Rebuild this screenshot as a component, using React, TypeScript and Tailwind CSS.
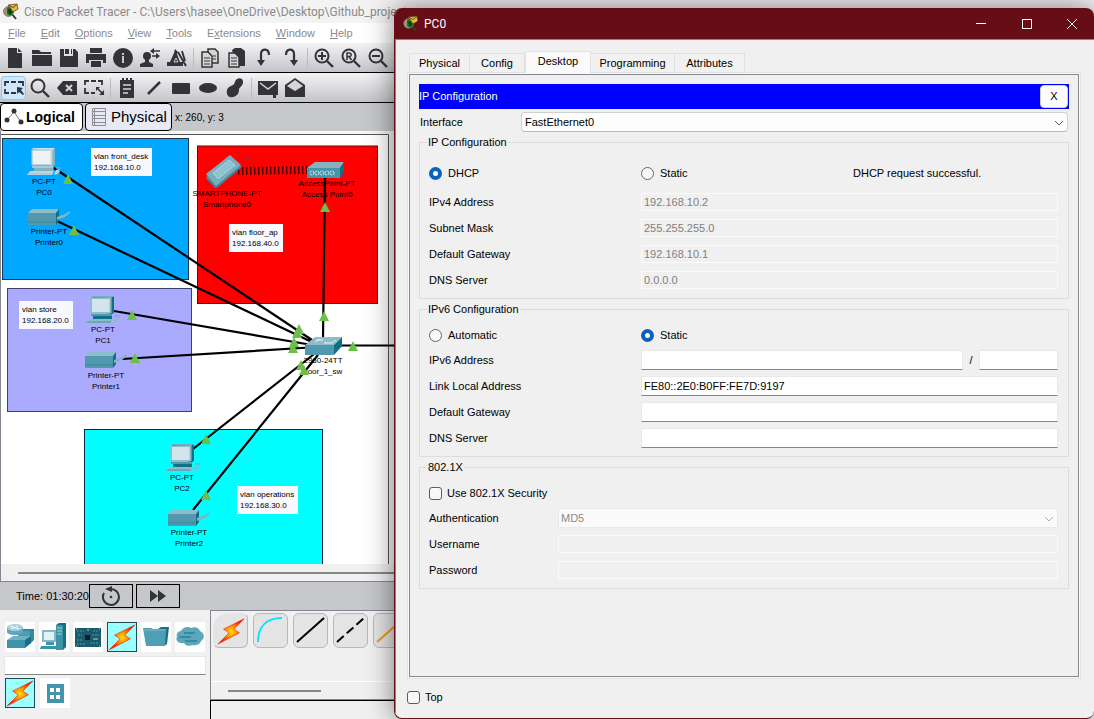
import React from "react";

type Kids = { children?: React.ReactNode };

/* ---------- small drawings ---------- */

function AppLogo() {
  return (
    <svg viewBox="0 0 18 18" className="h-[18px] w-[18px] shrink-0" aria-hidden="true">
      <path d="M10 11l4 5" stroke="#3a3a30" strokeWidth="2" />
      <circle cx="6.500" cy="8.500" r="5" fill="#a98c86" stroke="#5d4d48" strokeWidth="0.6" />
      <path d="M5 5l5-2 2 6-4 4-3-2z" fill="#0b7a12" />
      <path d="M6 7l3-1 1 4-2 2z" fill="#053f08" />
      <path d="M6 2l9-1 1 5-5 3-2-3z" fill="#e5b83a" stroke="#4d3a0c" strokeWidth="0.7" />
      <path d="M7 2.500l4 2 4-3" fill="none" stroke="#5c450e" strokeWidth="0.9" />
    </svg>
  );
}

function Icon({ children }: Kids) {
  return (
    <svg viewBox="0 0 20 20" className="h-5 w-5" fill="#333437" stroke="none" aria-hidden="true">
      {children}
    </svg>
  );
}

const lens = (
  <g fill="none" stroke="#333437">
    <circle cx="8" cy="8" r="6.500" strokeWidth="2" />
    <path d="M13 13l6 6" strokeWidth="2.400" />
  </g>
);

const fileIcons: { name: string; art?: React.ReactNode }[] = [
  { name: "New", art: <path d="M3 0h9v5h5v15H3zM13 0l4 4h-4z" /> },
  { name: "Open", art: <path d="M0 2h7l2 2h10v2H0zM0 7h20v11H0z" /> },
  { name: "Save", art: <path d="M1 1h4v7h9V1h2l3 3v15H1zM6 1h4v5H6zM12 1h1v5h-1z" /> },
  {
    name: "Print",
    art: <path d="M4 0h12v5H4zM0 6h20v9h-3v-3H3v3H0zM5 13h10v6H5z" />,
  },
  {
    name: "Network Info",
    art: (
      <>
        <circle cx="10" cy="10" r="10" />
        <path d="M9 5h2v2H9zM9 8h2v7H9z" fill="#c9c9cb" />
      </>
    ),
  },
  {
    name: "User Profile",
    art: (
      <>
        <circle cx="7" cy="8" r="4" />
        <path d="M5 11h4v3l4 2v3H0v-3l5-2z" />
        <path d="M13 3h7M12 8h6" stroke="#333437" strokeWidth="1.600" />
        <path d="M14 0v6l-4-3zM16 5v6l4-3z" />
      </>
    ),
  },
  {
    name: "Activity Wizard",
    art: (
      <>
        <path d="M8 1l3 3-1 2 3 8h3v4H0v-4h3l4-9z" />
        <path d="M11 4l8 14M15 3l3 10" stroke="#333437" strokeWidth="1.900" />
        <path d="M7 14l2-4 2 4z" fill="none" stroke="#c9c9cb" />
      </>
    ),
  },
  { name: "|" },
  {
    name: "Copy",
    art: (
      <g fill="#d6d6d7" stroke="#333437" strokeWidth="1.500">
        <path d="M8 1h7l3 3v11H8z" />
        <path d="M2 4h6l4 4v11H2z" />
        <path d="M4 10h6M4 13h6M4 16h6M13 8h3M13 11h3" strokeWidth="1.200" />
      </g>
    ),
  },
  {
    name: "Paste",
    art: (
      <>
        <path d="M5 2l3-2h6l4 3v15H9z" />
        <path d="M2 5h6l4 4v10H2z" fill="#d6d6d7" stroke="#333437" strokeWidth="1.500" />
        <path d="M4 10h6M4 13h6M4 16h6" stroke="#333437" strokeWidth="1.200" />
      </>
    ),
  },
  {
    name: "Undo",
    art: (
      <>
        <path d="M15 7C15 0 7 0 7 6v8" fill="none" stroke="#333437" strokeWidth="2.200" />
        <path d="M3 12h8l-4 6z" />
      </>
    ),
  },
  {
    name: "Redo",
    art: (
      <>
        <path d="M5 7c0-7 8-7 8-1v8" fill="none" stroke="#333437" strokeWidth="2.200" />
        <path d="M9 12h8l-4 6z" />
      </>
    ),
  },
  { name: "|" },
  {
    name: "Zoom In",
    art: (
      <>
        {lens}
        <path d="M4 8h8M8 4v8" stroke="#333437" strokeWidth="2" />
      </>
    ),
  },
  {
    name: "Zoom Reset",
    art: (
      <>
        {lens}
        <path d="M6 12V5h2.500a1.500 1.500 0 010 3.500H6M8 8.500L10.500 12" fill="none" stroke="#333437" strokeWidth="1.500" />
      </>
    ),
  },
  {
    name: "Zoom Out",
    art: (
      <>
        {lens}
        <path d="M4 8h8" stroke="#333437" strokeWidth="2" />
      </>
    ),
  },
];

const drawIcons: { name: string; art?: React.ReactNode }[] = [
  {
    name: "Select",
    art: (
      <>
        <path d="M1 8V4h4M7 4h5M14 4h5v4M1 11v4h4M7 15h5" fill="none" stroke="#333437" strokeWidth="1.800" />
        <path d="M13 9l6 1-2 2 3 4-1 1-4-3-2 2z" />
      </>
    ),
  },
  { name: "Inspect", art: lens },
  {
    name: "Delete",
    art: (
      <>
        <path d="M0 10l6-7h14v14H6z" />
        <path d="M9 7l6 6M15 7l-6 6" stroke="#d6d6d7" strokeWidth="2" />
      </>
    ),
  },
  {
    name: "Resize",
    art: (
      <>
        <path d="M1 7V3h4M7 3h5M14 3h4v4M1 10v5h4M7 15h4" fill="none" stroke="#333437" strokeWidth="1.800" />
        <path d="M13 10l5 5" stroke="#333437" strokeWidth="1.600" />
        <path d="M12 9h4l-4 4zM20 17h-5l5-5z" />
      </>
    ),
  },
  { name: "|" },
  {
    name: "Place Note",
    art: (
      <>
        <path d="M3 2h14v18H3z" />
        <path d="M5 0h2v3H5zM9 0h2v3H9zM13 0h2v3h-2z" />
        <path d="M6 7h8M6 11h8M6 15h5" stroke="#d6d6d7" strokeWidth="1.300" />
      </>
    ),
  },
  { name: "Draw Line", art: <path d="M4 16L16 4" stroke="#333437" strokeWidth="2.500" /> },
  { name: "Draw Rectangle", art: <rect x="1" y="5" width="18" height="11" rx="1" /> },
  { name: "Draw Ellipse", art: <ellipse cx="10" cy="10" rx="9" ry="5" /> },
  {
    name: "Draw Freeform",
    art: <path d="M10 4c1-5 9-5 8 1-1 4-4 4-4 7 0 5-5 8-9 7S0 10 6 8c3-1 3-2 4-4z" />,
  },
  { name: "|" },
  {
    name: "Add Simple PDU",
    art: (
      <>
        <path d="M0 3h20v14h-2v3h-3v-3H0z" />
        <path d="M2 5l8 6 8-6" fill="none" stroke="#d6d6d7" strokeWidth="1.500" />
      </>
    ),
  },
  {
    name: "Add Complex PDU",
    art: (
      <>
        <path d="M0 7l10-7 10 7v12H0z" />
        <path d="M2 8l8-6 8 6-8 5z" fill="#d6d6d7" />
      </>
    ),
  },
];

function ToolRow({ items, selected }: { items: typeof fileIcons; selected?: string }) {
  return (
    <div className="flex h-[30px] items-center overflow-hidden border-b border-black bg-gradient-to-b from-[#f4f4f4] to-[#c3c4c8] pl-px">
      {items.map((item, i) =>
        item.name === "|" ? (
          <span key={i} className="flex w-1.5 shrink-0 justify-center">
            <span className="h-5 w-px bg-[#bcbcbf]" />
          </span>
        ) : (
          <button
            key={item.name}
            type="button"
            aria-label={item.name}
            className={
              item.name === selected
                ? "flex h-6 w-[25px] shrink-0 items-center justify-center rounded-sm border border-[#8fc7f3] bg-[#cce8ff]"
                : "flex h-6 w-[27px] shrink-0 items-center justify-center"
            }
          >
            <Icon>{item.art}</Icon>
          </button>
        ),
      )}
    </div>
  );
}

/* ---------- topology ---------- */

function Pc({ x, y, pale }: { x: number; y: number; pale?: boolean }) {
  const side = pale ? "#86b2c0" : "#0d7085";
  const body = pale ? "#b9d5df" : "#8fbccb";
  const base = pale ? "#a5c9d5" : "#5199ae";
  return (
    <g transform={`translate(${x} ${y})`}>
      <path d="M5 1h21l1-1v17l-4 2z" fill={side} />
      <path d="M3 1l3-1h21l-3 2z" fill={pale ? "#cfe3ea" : "#79adbd"} />
      <rect x="3.500" y="1.500" width="21" height="16" rx="1" fill={body} />
      <rect x="5" y="3" width="17.500" height="13" fill={pale ? "#eef2f4" : "#d3e4ea"} />
      <path d="M4 18h21v2H4z" fill={base} />
      <path d="M6 20h19v3H6z" fill={side} />
      <path d="M2 23h24l-2 4H-1z" fill={body} />
      <path d="M1 25h23l-1 2H-1z" fill={base} opacity="0.6" />
      <path d="M28 22l3-1 1 3-4 3-2-1z" fill={body} />
      <path d="M28 20h5" stroke={base} strokeWidth="0.8" strokeDasharray="2 1" />
    </g>
  );
}

function Printer({ x, y }: { x: number; y: number }) {
  return (
    <g transform={`translate(${x} ${y})`}>
      <path d="M0 4l4-4h27l-3 4z" fill="#8fbccb" />
      <path d="M28 4l3-4v12l-3 4z" fill="#0d7085" />
      <path d="M0 4h28v12H0z" fill="#5199ae" />
      <path d="M0 13h28" stroke="#3d8298" strokeWidth="0.8" />
      <path d="M29 8l8-3 5-3v2l-5 4-8 3z" fill="#86b2c0" />
    </g>
  );
}

const lights: [number, number][] = [
  [68, 179], [74, 230], [132, 315], [135, 358], [206, 439], [206, 495], [325, 207],
  [324, 316], [353, 346], [299, 329], [297, 333], [294, 342], [293, 348], [301, 365], [304, 370],
];

const nodeLabels: { at: string; lines: [string, string] }[] = [
  { at: "left-[43px] top-[45px]", lines: ["PC-PT", "PC0"] },
  { at: "left-[48px] top-[95px]", lines: ["Printer-PT", "Printer0"] },
  { at: "left-[226px] top-[57px]", lines: ["SMARTPHONE-PT", "Smartphone0"] },
  { at: "left-[326px] top-[47px]", lines: ["AccessPoint-PT", "Access Point0"] },
  { at: "left-[102px] top-[193px]", lines: ["PC-PT", "PC1"] },
  { at: "left-[105px] top-[239px]", lines: ["Printer-PT", "Printer1"] },
  { at: "left-[181px] top-[341px]", lines: ["PC-PT", "PC2"] },
  { at: "left-[188px] top-[396px]", lines: ["Printer-PT", "Printer2"] },
  { at: "left-[322px] top-[224px]", lines: ["2960-24TT", "floor_1_sw"] },
];

const notes: { at: string; lines: [string, string] }[] = [
  { at: "left-[90px] top-[17px]", lines: ["vlan front_desk", "192.168.10.0"] },
  { at: "left-[228px] top-[93px]", lines: ["vlan floor_ap", "192.168.40.0"] },
  { at: "left-[18px] top-[170px]", lines: ["vlan store", "192.168.20.0"] },
  { at: "left-[236px] top-[355px]", lines: ["vlan operations", "192.168.30.0"] },
];

function Lights() {
  return (
    <>
      {lights.map(([x, y], i) => (
        <path key={i} d={`M${x} ${y - 5}l5 10h-10z`} fill="#6cc04a" />
      ))}
    </>
  );
}

function Topology() {
  return (
    <main className="relative min-h-[433px] flex-1 overflow-hidden border-l border-[#828790] bg-[#f7f7f7]">
      <svg viewBox="1 131 400 433" className="absolute left-0 top-0 h-[433px] w-[400px]" aria-hidden="true">
        <path d="M0 134.500h388.500V566H0z" fill="#fff" stroke="#555" />
        <g stroke="#1c3550">
          <rect x="2.500" y="138.500" width="186" height="141" fill="#00a8ff" />
          <rect x="197.500" y="146" width="180" height="157.500" fill="#f00" stroke="#700" />
          <rect x="7.500" y="288.500" width="184" height="123" fill="#aaaaff" stroke="#404070" />
          <rect x="84.500" y="429.500" width="238" height="150" fill="#0ff" stroke="#125" />
        </g>
        <g stroke="#000" strokeWidth="2.200">
          <path d="M54 168L318 344M57 221L316 344M114 311L318 346M122 359L318 347M193 449L318 351M193 510L318 355M325 176L323 340" />
          <path d="M338 345.500H401" strokeWidth="1.800" />
        </g>
        <path d="M238 171l70-1" stroke="#4a0000" strokeWidth="8" strokeDasharray="1.400 2.600" />
        <Pc x={28} y={148} pale />
        <Pc x={87} y={296} />
        <Pc x={167} y={444} />
        <Printer x={28} y={209} />
        <Printer x={85} y={352} />
        <Printer x={168} y={510} />
        {/* smartphone */}
        <path d="M239 167l7-7" stroke="#1f5c6b" />
        <circle cx="247" cy="159" r="1.200" fill="#1f5c6b" />
        <path d="M207 176l24-19 11 10-24 20-3 1-9-10z" fill="#3f889d" />
        <path d="M206 174l24-19 11 10-25 21z" fill="#79adbd" />
        <path d="M213 173l16-13 6 5-17 14z" fill="#8fc3d2" stroke="#d3ecf3" strokeDasharray="1 1" />
        {/* access point */}
        <path d="M307 168l8-6h29l-4 6z" fill="#86b2c0" />
        <path d="M340 168l4-6v10l-4 6z" fill="#0d7085" />
        <path d="M307 168h33v10h-33z" fill="#4795aa" />
        <g fill="none" stroke="#e3f5fa" strokeDasharray="2 1">
          <circle cx="312" cy="173" r="2" />
          <circle cx="317" cy="173" r="2" />
          <circle cx="322" cy="173" r="2" />
          <circle cx="327" cy="173" r="2" />
          <circle cx="332" cy="173" r="2" />
        </g>
        {/* switch */}
        <path d="M305 345l10-8h27l-8 8z" fill="#8fbccb" />
        <path d="M334 345l8-8v9l-8 9z" fill="#0d7085" />
        <path d="M305 345h29v10h-29z" fill="#5199ae" />
        <path d="M315 342l5-3M316 340h7M324 343h8l4-3" fill="none" stroke="#e3f5fa" />
      </svg>
      {nodeLabels.map((n) => (
        <p
          key={n.lines.join()}
          className={"absolute -translate-x-1/2 whitespace-nowrap text-center text-[8px] leading-[11px] text-black " + n.at}
        >
          {n.lines[0]}
          <br />
          {n.lines[1]}
        </p>
      ))}
      {notes.map((n) => (
        <p
          key={n.lines.join()}
          className={"absolute whitespace-nowrap bg-[#f8f8ff] py-[3px] pl-[3px] pr-1 text-[8px] leading-[11px] text-black " + n.at}
        >
          {n.lines[0]}
          <br />
          {n.lines[1]}
        </p>
      ))}
      <svg viewBox="1 131 400 433" className="absolute left-0 top-0 h-[433px] w-[400px]" aria-hidden="true">
        <Lights />
      </svg>
    </main>
  );
}

/* ---------- device palette ---------- */

function Bolt() {
  return (
    <svg viewBox="0 0 30 30" className="h-7 w-7 shrink-0" aria-hidden="true">
      <defs>
        <radialGradient id="bolt">
          <stop offset="0" stopColor="#ffe600" />
          <stop offset="0.450" stopColor="#ff8a00" />
          <stop offset="1" stopColor="#ff1500" />
        </radialGradient>
      </defs>
      <path d="M29 2L7 13l6 4L1 29l23-12-6-4z" fill="url(#bolt)" stroke="#f01808" strokeWidth="0.600" />
    </svg>
  );
}

function PaletteArt({ children }: Kids) {
  return (
    <svg viewBox="0 0 30 30" className="h-[30px] w-[30px]" aria-hidden="true">
      {children}
    </svg>
  );
}

const palette: { name: string; art: React.ReactNode }[] = [
  {
    name: "Network Devices",
    art: (
      <PaletteArt>
        <path d="M13 9l4-2h12v11l-4 4H13z" fill="#2f8ca3" />
        <path d="M13 9h12v12H13z" fill="#4c9db2" />
        <path d="M2 5v5c0 4 16 4 16 0V5z" fill="#5ba8bc" />
        <ellipse cx="10" cy="5.500" rx="8" ry="3.500" fill="#a7cfda" />
        <path d="M5 4l9 3M13 4L6 7" stroke="#fff" />
        <path d="M2 18l6-4h18l-5 5H2z" fill="#6fb0c2" />
        <path d="M2 18h18v8H2z" fill="#3c93aa" />
        <path d="M20 18l6-4v7l-6 5z" fill="#176f86" />
      </PaletteArt>
    ),
  },
  {
    name: "End Devices",
    art: (
      <PaletteArt>
        <path d="M17 3l3-2h7v24l-3 3h-7z" fill="#176f86" />
        <path d="M17 3h7v25h-7z" fill="#3c93aa" />
        <path d="M18 6h5M18 9h5M18 12h5" stroke="#a7cfda" />
        <path d="M3 8h14v12H3z" fill="#86b9c8" />
        <path d="M5 10h10v8H5z" fill="#e4f1f5" />
        <path d="M7 20h8v3H7zM2 24h15v3H1z" fill="#3c93aa" />
      </PaletteArt>
    ),
  },
  {
    name: "Components",
    art: (
      <PaletteArt>
        <path d="M2 6h26v19H2z" fill="#1b5a6c" />
        <path d="M4 9h7M5 13h4M20 9h6M19 13h7M4 18h6M4 22h8M17 21h9" stroke="#4a9cb1" strokeDasharray="2 1" />
        <path d="M12 13h5v5h-5z" fill="#0a222b" />
        <path d="M3 7h1M26 7h1M3 24h1M26 24h1M14 8h2M20 17h5" stroke="#d8c9a0" />
      </PaletteArt>
    ),
  },
  { name: "Connections", art: <Bolt /> },
  {
    name: "Miscellaneous",
    art: (
      <PaletteArt>
        <path d="M17 7l3-2h8l-2 17-3 2z" fill="#176f86" />
        <path d="M2 6h8l2 1h13l-1 17H5z" fill="#4f9fb4" />
        <path d="M2 8h23" stroke="#86b9c8" />
      </PaletteArt>
    ),
  },
  {
    name: "Multiuser",
    art: (
      <PaletteArt>
        <path d="M6 9c2-4 7-5 10-3 4-2 8 0 9 3 5 2 5 8 1 10-1 4-6 5-9 4-4 2-7 0-8-2-6 1-9-3-7-6-1-3 1-6 4-6z" fill="#5ba8bc" />
        <path d="M9 11h11M4 15h12M10 19h12" stroke="#2c7f97" strokeWidth="1.300" />
      </PaletteArt>
    ),
  },
];

function PaletteButton({ name, active, children }: Kids & { name: string; active?: boolean }) {
  return (
    <button
      type="button"
      aria-label={name}
      className={
        active
          ? "flex h-[30px] w-[30px] items-center justify-center border border-[#1b4a55] bg-[#99ffff]"
          : "flex h-[30px] w-[30px] items-center justify-center bg-white"
      }
    >
      {children}
    </button>
  );
}

const cables: { name: string; art: React.ReactNode }[] = [
  { name: "Automatic", art: <Bolt /> },
  {
    name: "Console",
    art: <path d="M5 29C5 14 13 5 29 5" fill="none" stroke="#00e5ff" strokeWidth="2" />,
  },
  { name: "Copper Straight-Through", art: <path d="M4 29L31 5" stroke="#000" strokeWidth="2" /> },
  {
    name: "Copper Cross-Over",
    art: <path d="M4 29L31 5" stroke="#000" strokeWidth="2" strokeDasharray="9 4" />,
  },
  { name: "Fiber", art: <path d="M4 29L31 5" stroke="#f09a10" strokeWidth="2" /> },
];

function Bottom() {
  return (
    <footer className="flex h-[109px] shrink-0 bg-[#f0f0f0]">
      <section className="w-[210px] shrink-0 px-1 pt-3">
        <div className="flex gap-1 pl-px">
          {palette.map((p) => (
            <PaletteButton key={p.name} name={p.name} active={p.name === "Connections"}>
              {p.art}
            </PaletteButton>
          ))}
        </div>
        <input
          aria-label="Search devices"
          className="mt-1 block h-[19px] w-full border border-b-[#868686] border-l-[#e6e6e6] border-r-[#e6e6e6] border-t-[#e6e6e6] bg-white px-1 text-[11px] outline-none"
        />
        <div className="mt-[3px] flex gap-[5px] pl-px">
          <PaletteButton name="Connections" active>
            <Bolt />
          </PaletteButton>
          <PaletteButton name="Structured Cabling">
            <PaletteArt>
              <path d="M7 6h17v19H7z" fill="#4495ab" />
              <path d="M10 10h4v4h-4zM16 10h4v4h-4zM10 17h4v4h-4zM16 17h4v4h-4z" fill="#fff" />
            </PaletteArt>
          </PaletteButton>
        </div>
      </section>
      <section className="flex min-w-0 flex-1 flex-col">
        <div className="flex h-[90px] flex-col border border-[#828790]">
          <div className="flex h-[71px] gap-[5px] border-b border-white pl-0.5 pt-0.5">
            {cables.map((c, i) => (
              <button
                key={c.name}
                type="button"
                aria-label={c.name}
                className={
                  "flex h-[35px] w-[35px] shrink-0 items-center justify-center border border-[#b8b8b8] bg-[#e4e4e4] " +
                  (i === 0 ? "rounded-md rounded-tl-2xl border-l-transparent border-t-transparent" : "rounded-md")
                }
              >
                {i === 0 ? (
                  c.art
                ) : (
                  <svg viewBox="0 0 35 35" className="h-[35px] w-[35px] shrink-0" aria-hidden="true">
                    {c.art}
                  </svg>
                )}
              </button>
            ))}
          </div>
          <div className="ml-[17px] mt-2 h-0.5 w-[93px] bg-[#868686]" />
        </div>
        <div className="flex-1 border-l border-t border-black" />
      </section>
    </footer>
  );
}

/* ---------- main window ---------- */

const menus = ["File", "Edit", "Options", "View", "Tools", "Extensions", "Window", "Help"];
const menuKeys = [0, 0, 0, 0, 0, 1, 0, 0];

function MainWindow() {
  return (
    <div className="flex min-h-screen w-full flex-col">
      <header className="flex h-[23px] shrink-0 items-center gap-1 overflow-hidden bg-[#f3f3f3] pl-0.5">
        <AppLogo />
        <h1 className="whitespace-nowrap font-['Roboto','Open_Sans',sans-serif] text-[12px] leading-4 text-[#8a8a8a]">
          Cisco Packet Tracer - C:\Users\hasee\OneDrive\Desktop\Github_project
        </h1>
      </header>
      <nav className="flex h-5 shrink-0 items-center gap-[15px] bg-white pl-2 text-[11px] text-[#8a8a8a]">
        {menus.map((m, i) => (
          <button key={m} type="button">
            {m.slice(0, menuKeys[i])}
            <u>{m.charAt(menuKeys[i])}</u>
            {m.slice(menuKeys[i] + 1)}
          </button>
        ))}
      </nav>
      <ToolRow items={fileIcons} />
      <ToolRow items={drawIcons} selected="Select" />
      <div className="flex h-7 shrink-0 items-center gap-0.5 bg-[#c6c7cb]">
        <button type="button" className="flex h-7 w-[83px] items-center gap-0.5 rounded-sm border border-black bg-white pl-[3px] text-[14px] font-bold">
          <svg viewBox="0 0 20 20" className="h-5 w-5" fill="#333437" aria-hidden="true">
            <path d="M3 13l7-8 7 10" fill="none" stroke="#777" />
            <circle cx="3" cy="13" r="2.500" />
            <circle cx="10" cy="4" r="2.500" />
            <circle cx="17" cy="15" r="2.500" />
          </svg>
          Logical
        </button>
        <button type="button" className="flex h-7 w-[87px] items-center gap-1 rounded-sm border border-black bg-[#e8e9f3] pl-[5px] text-[15px]">
          <svg viewBox="0 0 16 20" className="h-5 w-4" fill="none" stroke="#8c8d92" aria-hidden="true">
            <path d="M1.500 1.500h13v17h-13zM1.500 4.500h13M1.500 8.500h13M1.500 11.500h13M1.500 15.500h13M3.500 1.500v17" />
          </svg>
          Physical
        </button>
        <span className="pl-px text-[10px]">x: 260, y: 3</span>
      </div>
      <Topology />
      <div className="h-[18px] shrink-0 border-b border-l border-[#828790] bg-[#f0f0f0] pl-[17px] pt-2">
        <div className="h-0.5 bg-[#868686]" />
      </div>
      <div className="flex h-7 shrink-0 items-center gap-[3px] bg-[#c6c7cb] pl-4 text-[11px]">
        <span className="w-[70px] whitespace-nowrap">Time: 01:30:20</span>
        <button type="button" aria-label="Power cycle devices" className="flex h-6 w-11 items-center justify-center border border-black">
          <svg viewBox="0 0 20 20" className="h-5 w-5" aria-hidden="true">
            <path d="M9 3a8 8 0 11-6 4" fill="none" stroke="#333437" strokeWidth="2" />
            <path d="M4 3l7-3v6z" fill="#333437" />
            <circle cx="10" cy="11" r="1.300" fill="#333437" />
          </svg>
        </button>
        <button type="button" aria-label="Fast forward time" className="flex h-6 w-11 items-center justify-center border border-black">
          <svg viewBox="0 0 18 14" className="h-3.5 w-[18px]" fill="#333437" aria-hidden="true">
            <path d="M1 1l8 6-8 6zM9 1l8 6-8 6z" />
          </svg>
        </button>
      </div>
      <Bottom />
    </div>
  );
}

/* ---------- PC0 window ---------- */

const disabledBox =
  "h-[18px] min-w-0 flex-1 border border-[#fbfbfb] bg-[#f0f0f0] px-0.5 text-[11px] leading-4 text-[#808080] outline-none";
const editBox =
  "h-5 min-w-0 border border-b-[#868686] border-l-[#e8e8e8] border-r-[#e8e8e8] border-t-[#e8e8e8] bg-white px-0.5 text-[11px] leading-4 text-black outline-none";
const radioBox =
  "m-0 h-[13px] w-[13px] shrink-0 appearance-none rounded-full border border-[#666] bg-[#f8f8f8] checked:border-4 checked:border-[#0a63b8] checked:bg-white";
const tickBox =
  "m-0 h-[13px] w-[13px] shrink-0 appearance-none rounded-[3px] border border-[#5c5c5c] bg-[#f8f8f8] checked:bg-[#0a63b8]";

function Group({ title, children }: Kids & { title: string }) {
  return (
    <fieldset className="mt-[3px] min-w-0 border border-[#dcdcdc] pb-[5px] pl-[9px] pr-2.5">
      <legend className="-ml-0.5 h-3.5 px-px leading-[14px]">{title}</legend>
      {children}
    </fieldset>
  );
}

function Row({ id, label, wide, children }: Kids & { id: string; label: string; wide?: boolean }) {
  return (
    <div className="flex h-[26px] items-center">
      <label htmlFor={id} className={wide ? "w-[129px] shrink-0" : "w-[212px] shrink-0"}>
        {label}
      </label>
      {children}
    </div>
  );
}

function Choice({ name, label, on }: { name: string; label: string; on?: boolean }) {
  return (
    <label className="flex w-[212px] shrink-0 items-center gap-1.5">
      <input type="radio" name={name} defaultChecked={on} className={radioBox} />
      {label}
    </label>
  );
}

function Chevron({ faded }: { faded?: boolean }) {
  return (
    <svg
      viewBox="0 0 10 6"
      className="pointer-events-none absolute right-1 top-2 h-1.5 w-2.5"
      fill="none"
      stroke={faded ? "#b0b0b0" : "#606060"}
      aria-hidden="true"
    >
      <path d="M1 1l4 4 4-4" />
    </svg>
  );
}

function PcWindow() {
  return (
    <div
      role="dialog"
      aria-label="PC0"
      className="absolute bottom-0 left-[394px] right-0 top-2 flex flex-col overflow-hidden rounded-lg border-b border-l border-[#670d16] bg-[#f0f0f0] text-[11px] text-black shadow-[0_0_28px_rgba(0,0,0,0.5)]"
    >
      <header className="flex h-8 shrink-0 items-center border-b border-[#828790] bg-[#670d16] pl-[7px] text-white">
        <AppLogo />
        <h2 className="ml-1 flex-1 font-['Roboto','Open_Sans',sans-serif] text-[12px]">PC0</h2>
        <button type="button" aria-label="Minimize" className="flex h-full w-[46px] items-center justify-center">
          <span className="h-px w-2.5 bg-white" />
        </button>
        <button type="button" aria-label="Maximize" className="flex h-full w-[45px] items-center justify-center">
          <span className="h-2.5 w-2.5 border border-white" />
        </button>
        <button type="button" aria-label="Close" className="flex h-full w-[45px] items-center justify-center">
          <svg viewBox="0 0 10 10" className="h-2.5 w-2.5" stroke="#fff" aria-hidden="true">
            <path d="M0 0l10 10M10 0L0 10" />
          </svg>
        </button>
      </header>

      <div className="flex flex-1 flex-col border-l border-[#828790] pb-3.5 pl-[11px] pr-[13px] pt-[11px]">
        <div role="tablist" className="z-10 -mb-px flex items-end pl-0.5">
          {[
            ["Physical", "w-[61px]"],
            ["Config", "w-[55px]"],
            ["Desktop", "w-[66px]"],
            ["Programming", "w-[84px]"],
            ["Attributes", "w-[70px]"],
          ].map(([name, width]) => (
            <button
              key={name}
              type="button"
              role="tab"
              aria-selected={name === "Desktop"}
              className={
                (name === "Desktop"
                  ? "h-[22px] border border-b-0 border-[#e2e2e2] bg-[#fafafa] pb-0.5 "
                  : "h-5 border border-l-0 border-[#e0e0e0] bg-[#f1f1f1] first:border-l ") + width
              }
            >
              {name}
            </button>
          ))}
        </div>

        <div className="flex-1 border border-[#e2e2e2] bg-[#fafafa] p-px">
          <div className="h-full border border-[#828790] bg-[#f0f0f0] px-[9px] pt-[9px]">
            <div className="flex h-[25px] items-center justify-between bg-[#0000ff] pr-px text-white">
              <h3>IP Configuration</h3>
              <button type="button" className="h-[23px] w-7 rounded border border-[#d0d0d0] bg-[#fdfdfd] text-black">
                X
              </button>
            </div>
            <div className="mt-[3px] flex h-5 items-center pl-px pr-px">
              <label htmlFor="interface" className="w-[101px] shrink-0">
                Interface
              </label>
              <div className="relative flex-1">
                <select
                  id="interface"
                  className="block h-5 w-full appearance-none rounded-sm border border-[#d0d0d0] border-b-[#b8b8b8] bg-[#fdfdfd] pl-[3px] text-[11px] leading-4 outline-none"
                >
                  <option>FastEthernet0</option>
                </select>
                <Chevron />
              </div>
            </div>

            <Group title="IP Configuration">
              <div className="mb-1 mt-3 flex h-6 items-center">
                <Choice name="v4" label="DHCP" on />
                <Choice name="v4" label="Static" />
                <output>DHCP request successful.</output>
              </div>
              <Row id="ip4" label="IPv4 Address">
                <input id="ip4" disabled defaultValue="192.168.10.2" className={disabledBox} />
              </Row>
              <Row id="mask" label="Subnet Mask">
                <input id="mask" disabled defaultValue="255.255.255.0" className={disabledBox} />
              </Row>
              <Row id="gw4" label="Default Gateway">
                <input id="gw4" disabled defaultValue="192.168.10.1" className={disabledBox} />
              </Row>
              <Row id="dns4" label="DNS Server">
                <input id="dns4" disabled defaultValue="0.0.0.0" className={disabledBox} />
              </Row>
            </Group>

            <Group title="IPv6 Configuration">
              <div className="mt-[7px] flex h-6 items-center">
                <Choice name="v6" label="Automatic" />
                <Choice name="v6" label="Static" on />
              </div>
              <Row id="ip6" label="IPv6 Address">
                <input id="ip6" className={editBox + " flex-1"} />
                <span className="w-4 text-center">/</span>
                <input aria-label="IPv6 prefix length" className={editBox + " w-[79px]"} />
              </Row>
              <Row id="link" label="Link Local Address">
                <input id="link" defaultValue="FE80::2E0:B0FF:FE7D:9197" className={editBox + " flex-1"} />
              </Row>
              <Row id="gw6" label="Default Gateway">
                <input id="gw6" className={editBox + " flex-1"} />
              </Row>
              <Row id="dns6" label="DNS Server">
                <input id="dns6" className={editBox + " flex-1"} />
              </Row>
            </Group>

            <Group title="802.1X">
              <div className="mt-[7px] flex h-6 items-center">
                <label className="flex items-center gap-[5px]">
                  <input type="checkbox" className={tickBox} />
                  Use 802.1X Security
                </label>
              </div>
              <Row id="auth" label="Authentication" wide>
                <div className="relative flex-1">
                  <select
                    id="auth"
                    disabled
                    className="block h-5 w-full appearance-none border border-[#e8e8e8] bg-[#fafafa] pl-0.5 text-[11px] leading-4 text-[#8a8a8a] opacity-100"
                  >
                    <option>MD5</option>
                  </select>
                  <Chevron faded />
                </div>
              </Row>
              <Row id="user" label="Username" wide>
                <input id="user" disabled className={disabledBox} />
              </Row>
              <Row id="pass" label="Password" wide>
                <input id="pass" type="password" disabled className={disabledBox} />
              </Row>
            </Group>
          </div>
        </div>

        <label className="mt-[11px] flex h-3.5 items-center gap-[5px] self-start">
          <input type="checkbox" className={tickBox} />
          Top
        </label>
      </div>
    </div>
  );
}

export default function App() {
  return (
    <div className="relative min-h-screen overflow-hidden bg-[#f0f0f0] font-['Liberation_Sans',Arial,sans-serif] text-black">
      <MainWindow />
      <PcWindow />
    </div>
  );
}
